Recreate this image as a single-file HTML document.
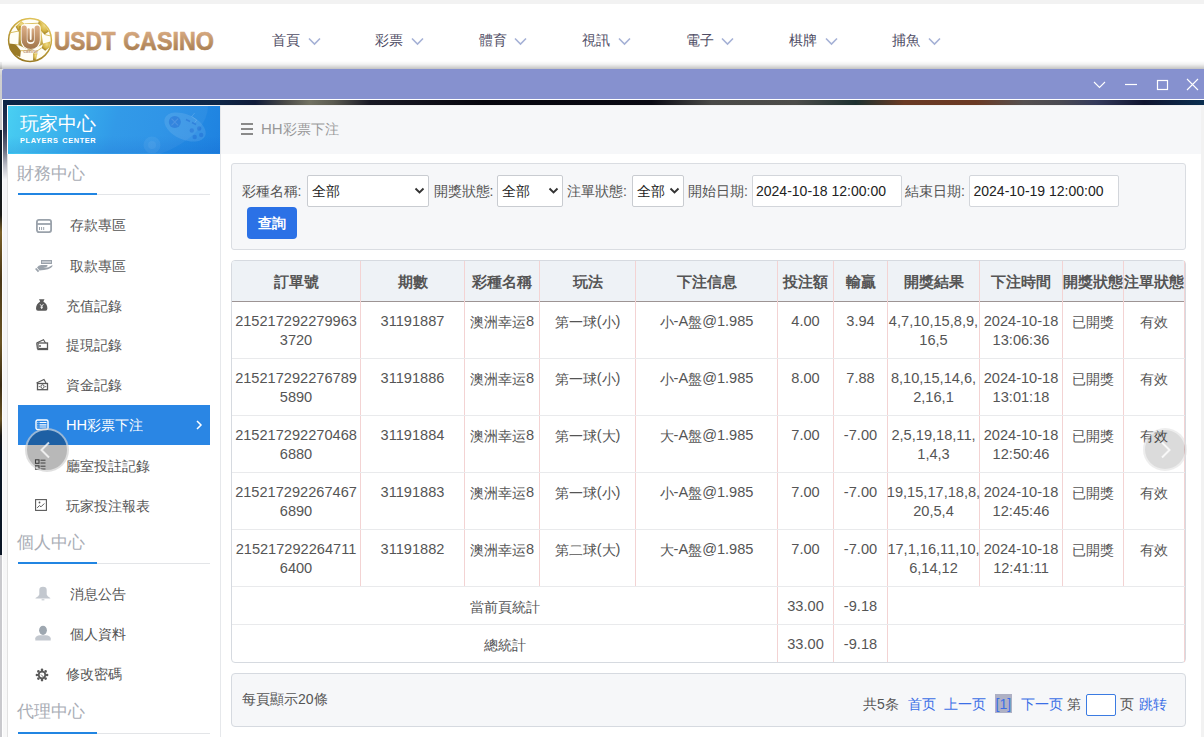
<!DOCTYPE html><html><head><meta charset="utf-8"><style>
*{margin:0;padding:0;box-sizing:border-box}
html,body{width:1204px;height:737px;overflow:hidden;background:#fff;font-family:"Liberation Sans",sans-serif;color:#333}
.a{position:absolute}
.nw{white-space:nowrap}
.n{font-size:14.6px}
.c{position:relative;top:1px}
</style></head><body><div class="a" style="left:0px;top:0px;width:1204px;height:4px;background:#f2f2f2"></div>
<svg class="a" style="left:0;top:0" width="230" height="68" viewBox="0 0 230 68">
<defs><radialGradient id="gd" cx="0.6" cy="0.3" r="0.8"><stop offset="0" stop-color="#f0dc8a"/><stop offset=".5" stop-color="#d8b848"/><stop offset="1" stop-color="#8a6a18"/></radialGradient>
<linearGradient id="ub" x1="0" y1="0" x2="0" y2="1"><stop offset="0" stop-color="#d8aa82"/><stop offset="1" stop-color="#a67a50"/></linearGradient>
<linearGradient id="tg" x1="0" y1="0" x2="0" y2="1"><stop offset="0.1" stop-color="#dcae86"/><stop offset="1" stop-color="#a07648"/></linearGradient></defs>
<circle cx="30" cy="40" r="21.4" fill="#fffef6" stroke="url(#gd)" stroke-width="1.5"/>
<g fill="url(#gd)">
<path d="M38.9 21.1 L44.5 24.6 L48.8 31.6 L44.5 34.5 L40.3 30.2 L38.2 23.2 Z"/>
<path d="M9.2 43.6 L15.6 44.3 L20.9 50.7 L20.2 57 L13.5 54.2 L9.9 49.3 Z" fill="#9a7a26"/>
<path d="M15.6 26.7 L21.2 21.1 L24.8 23.9 L22.6 30.2 L18.4 31.6 Z"/>
<path d="M43.1 43.6 L50.2 41.5 L49.5 47.2 L45.2 50.7 L41.7 47.9 Z"/>
<path d="M33.2 53.5 L37.5 53.2 L36 59.9 L33.2 60.6 Z"/>
<path d="M19.1 26 L40.3 24.6 L43.1 44.3 L30.4 50.7 L18.4 45 Z" opacity=".9"/>
</g>
<g stroke="#d6b850" stroke-width=".9" fill="none"><path d="M22.6 30.2 L9 33 M24.8 23.9 L38.2 23.2 M44.5 34.5 L50.8 36 M15.6 44.3 L18.4 45 M41.7 47.9 L33.2 53.5 M20.9 50.7 L30.4 50.7"/></g>
<path d="M20.8 28 Q20.8 24 25 24 H36.5 Q40.7 24 40.7 28 V40 Q40.7 49.6 30.7 49.6 Q20.8 49.6 20.8 40 Z" fill="#fffdf6"/>
<path d="M24.2 28 V40 A6.5 6.5 0 0 0 37.2 40 V28" fill="none" stroke="url(#ub)" stroke-width="5.2" stroke-linecap="round"/>
<path d="M28.6 29.5 V39 A2.1 2.1 0 0 0 32.8 39 V29.5" fill="none" stroke="url(#ub)" stroke-width="2.4" stroke-linecap="round"/>
<text x="30.5" y="53" font-size="4.6" text-anchor="middle" fill="#c09a80" font-family="Liberation Sans" font-weight="bold">casino</text>
<g font-family="Liberation Sans" font-weight="bold" font-size="25" fill="url(#tg)" stroke="url(#tg)" stroke-width="0.7">
<text x="54" y="49.5" textLength="61.5" lengthAdjust="spacingAndGlyphs">USDT</text>
<text x="123.3" y="49.5" textLength="90.5" lengthAdjust="spacingAndGlyphs">CASINO</text>
</g>
</svg>
<div class="a nw" style="left:272.0px;top:31px;font-size:14px;line-height:18px;color:#4f4d65">首頁</div>
<svg class="a" style="left:307.5px;top:36.5px" width="13" height="9" viewBox="0 0 13 9"><path d="M1 1.5 L6.5 7 L12 1.5" fill="none" stroke="#a5b1d6" stroke-width="1.6"/></svg>
<div class="a nw" style="left:375.4px;top:31px;font-size:14px;line-height:18px;color:#4f4d65">彩票</div>
<svg class="a" style="left:410.9px;top:36.5px" width="13" height="9" viewBox="0 0 13 9"><path d="M1 1.5 L6.5 7 L12 1.5" fill="none" stroke="#a5b1d6" stroke-width="1.6"/></svg>
<div class="a nw" style="left:478.8px;top:31px;font-size:14px;line-height:18px;color:#4f4d65">體育</div>
<svg class="a" style="left:514.3px;top:36.5px" width="13" height="9" viewBox="0 0 13 9"><path d="M1 1.5 L6.5 7 L12 1.5" fill="none" stroke="#a5b1d6" stroke-width="1.6"/></svg>
<div class="a nw" style="left:582.2px;top:31px;font-size:14px;line-height:18px;color:#4f4d65">視訊</div>
<svg class="a" style="left:617.7px;top:36.5px" width="13" height="9" viewBox="0 0 13 9"><path d="M1 1.5 L6.5 7 L12 1.5" fill="none" stroke="#a5b1d6" stroke-width="1.6"/></svg>
<div class="a nw" style="left:685.6px;top:31px;font-size:14px;line-height:18px;color:#4f4d65">電子</div>
<svg class="a" style="left:721.1px;top:36.5px" width="13" height="9" viewBox="0 0 13 9"><path d="M1 1.5 L6.5 7 L12 1.5" fill="none" stroke="#a5b1d6" stroke-width="1.6"/></svg>
<div class="a nw" style="left:789.0px;top:31px;font-size:14px;line-height:18px;color:#4f4d65">棋牌</div>
<svg class="a" style="left:824.5px;top:36.5px" width="13" height="9" viewBox="0 0 13 9"><path d="M1 1.5 L6.5 7 L12 1.5" fill="none" stroke="#a5b1d6" stroke-width="1.6"/></svg>
<div class="a nw" style="left:892.4px;top:31px;font-size:14px;line-height:18px;color:#4f4d65">捕魚</div>
<svg class="a" style="left:927.9px;top:36.5px" width="13" height="9" viewBox="0 0 13 9"><path d="M1 1.5 L6.5 7 L12 1.5" fill="none" stroke="#a5b1d6" stroke-width="1.6"/></svg>
<div class="a" style="left:0px;top:62px;width:2px;height:68px;background:linear-gradient(#f4f4f4,#d0d0d0 20%,#c8c8c8)"></div>
<div class="a" style="left:0px;top:130px;width:2px;height:425px;background:linear-gradient(#0b1a2a,#1a1a18 20%,#7a6028 24%,#4a3818 35%,#6a5424 50%,#3a2c14 60%,#6a5424 68%,#1a1a1a 72%,#0a1626 76%,#0a1626)"></div>
<div class="a" style="left:0px;top:555px;width:2px;height:182px;background:#c9c9cd"></div>
<div class="a" style="left:0px;top:61px;width:1204px;height:8px;background:linear-gradient(rgba(0,0,0,0),rgba(0,0,0,0.05) 40%,rgba(0,0,0,0.24))"></div>
<div class="a" style="left:2px;top:69px;width:1202px;height:30px;background:#8691cf;border-top-left-radius:2px"></div>
<svg class="a" style="left:1090px;top:76px" width="114" height="18" viewBox="0 0 114 18">
<path d="M4 6 L9.5 11.5 L15 6" fill="none" stroke="#fff" stroke-width="1.1"/>
<path d="M35 8.5 H47" stroke="#fff" stroke-width="1.2"/>
<rect x="67.5" y="4.5" width="10" height="9" fill="none" stroke="#fff" stroke-width="1.2"/>
<path d="M97 3 L108 14 M108 3 L97 14" stroke="#fff" stroke-width="1.1"/>
</svg>
<div class="a" style="left:2px;top:99px;width:1202px;height:1px;background:#fff"></div>
<div class="a" style="left:2px;top:99px;width:1px;height:638px;background:#fff"></div>
<div class="a" style="left:3px;top:100px;width:1201px;height:5px;background:linear-gradient(90deg,#0c2444 0%,#0f2748 18%,#101c3a 21%,#4a4a48 23.5%,#727262 25.5%,#5a5a50 27.5%,#1a1a26 30.5%,#07070f 40%,#0a0a14 54%,#4a4a48 59%,#4c4c4a 66%,#1d3030 71%,#6a3a24 75%,#6b3a25 81%,#555050 85%,#4a4a52 88%,#343a5c 91%,#101530 95%,#0a2e50 100%)"></div>
<div class="a" style="left:3px;top:100px;width:4px;height:637px;background:linear-gradient(#0c2444 0px,#2c3450 30px,#6a6e80 50px,#b8bac4 65px,#f4f4f6 80px,#f8f8f8 100%)"></div>
<div class="a" style="left:7px;top:105px;width:1197px;height:1px;background:#f0f0f0"></div>
<div class="a" style="left:7px;top:105px;width:1px;height:632px;background:linear-gradient(#fff 49px,#e2e2e2 49px)"></div>
<div class="a" style="left:8px;top:106px;width:212px;height:631px;background:#fff"></div>
<div class="a" style="left:220px;top:106px;width:1px;height:631px;background:#e6e8eb"></div>
<div class="a" style="left:221px;top:106px;width:980px;height:631px;background:#fff"></div>
<div class="a" style="left:221px;top:106px;width:980px;height:48px;background:#f6f7f9"></div>
<div class="a" style="left:1201px;top:106px;width:3px;height:631px;background:#f2f2f2"></div>
<div class="a" style="left:8px;top:106px;width:212px;height:48px;overflow:hidden;background:linear-gradient(105deg,#40cdf2 0%,#2eaaec 30%,#2795e7 50%,#2590e6 70%,#1f82e0 100%)">
<div class="a" style="left:-40px;top:-60px;width:240px;height:120px;border-radius:50%;background:rgba(255,255,255,0.05)"></div>
<div class="a" style="left:0;top:30px;width:212px;height:17px;background:linear-gradient(rgba(0,60,180,0),rgba(0,60,180,0.12))"></div>
<svg class="a" style="left:0;top:0" width="212" height="47" viewBox="0 0 212 47">
<g transform="rotate(24 177 21)"><ellipse cx="177" cy="21" rx="22" ry="12.5" fill="rgba(255,255,255,0.10)"/></g>
<circle cx="166.8" cy="16" r="6" fill="rgba(0,60,190,0.25)"/>
<path d="M163.5 12.7 L170.1 19.3 M170.1 12.7 L163.5 19.3" stroke="rgba(255,255,255,0.12)" stroke-width="1.2"/>
<g fill="rgba(0,60,190,0.22)"><circle cx="183.8" cy="24.5" r="2.2"/><circle cx="191.2" cy="22.5" r="2.2"/><circle cx="186.7" cy="31" r="2.2"/><circle cx="193.2" cy="29" r="2.2"/></g>
<path d="M178 13.5 l4 2 M184 16.5 l4 2" stroke="rgba(0,60,190,0.25)" stroke-width="1.5"/>
<path d="M186.7 7 l-3 3.5 l5 3.5 l-2 2.5" fill="none" stroke="rgba(255,255,255,0.14)" stroke-width="1"/>
<circle cx="144" cy="39" r="8.5" fill="rgba(255,255,255,0.06)"/>
<circle cx="144" cy="39" r="4" fill="rgba(255,255,255,0.05)"/>
</svg>
</div>
<div class="a nw" style="left:20px;top:113px;font-size:19px;line-height:22px;color:#fff">玩家中心</div>
<div class="a nw" style="left:20px;top:135.5px;font-size:7.4px;line-height:10px;color:#fff;font-weight:bold;letter-spacing:0.6px;word-spacing:1.2px">PLAYERS CENTER</div>
<div class="a nw" style="left:17px;top:162.5px;font-size:17px;line-height:22px;color:#a9adb5">財務中心</div>
<div class="a" style="left:18px;top:193px;width:79px;height:2px;background:#2185e2"></div>
<div class="a" style="left:97px;top:194px;width:113px;height:1px;background:#e3e5e8"></div>
<div class="a nw" style="left:17px;top:532px;font-size:17px;line-height:22px;color:#a9adb5">個人中心</div>
<div class="a" style="left:18px;top:562px;width:79px;height:2px;background:#2185e2"></div>
<div class="a" style="left:97px;top:563px;width:113px;height:1px;background:#e3e5e8"></div>
<div class="a nw" style="left:17px;top:701px;font-size:17px;line-height:22px;color:#a9adb5">代理中心</div>
<div class="a" style="left:18px;top:732px;width:79px;height:2px;background:#2185e2"></div>
<div class="a" style="left:97px;top:733px;width:113px;height:1px;background:#e3e5e8"></div>
<div class="a" style="left:35px;top:218px;line-height:0"><svg width="18" height="16" viewBox="0 0 18 16"><rect x="1.9" y="1.9" width="14.2" height="12.2" rx="2" fill="none" stroke="#9aa2ab" stroke-width="1.8"/><path d="M2 6 H16" stroke="#9aa2ab" stroke-width="1.8"/><path d="M4.5 9 v3 M6.6 9 v3 M8.7 9 v3" stroke="#9aa2ab" stroke-width="1"/></svg></div>
<div class="a nw" style="left:70px;top:216.3px;font-size:14px;line-height:19px;color:#555">存款專區</div>
<div class="a" style="left:35px;top:258px;line-height:0"><svg width="18" height="16" viewBox="0 0 18 16"><rect x="6.5" y="2.5" width="10" height="3" fill="#c4c9cf" stroke="#9aa2ab" stroke-width="1"/><path d="M2 9.5 Q3.5 7 6 7 H12.5 Q12.8 8.8 11 9 H8 Q11 9.8 13.5 9.2 L17.5 7 Q17.8 8.5 16 9.8 Q13.5 11.8 9 12 Q6 12 4.5 12.5 Z" fill="#9aa2ab"/><path d="M0.7 10.5 L3.6 13.6" stroke="#9aa2ab" stroke-width="1.8"/></svg></div>
<div class="a nw" style="left:70px;top:256.5px;font-size:14px;line-height:19px;color:#555">取款專區</div>
<div class="a" style="left:35px;top:297.5px;line-height:0"><svg width="14" height="14" viewBox="0 0 14 14"><path d="M4 1.2 H9.5 L8.3 3.5 Q12.5 6 12.4 10.5 Q12.4 12.7 10.5 12.7 H3 Q1 12.7 1 10.5 Q1 6 5.2 3.5 Z" fill="#595959"/><path d="M5 6.2 L6.7 8.2 L8.4 6.2 M6.7 8.2 V11 M5.4 9.2 H8" fill="none" stroke="#fff" stroke-width="0.9"/></svg></div>
<div class="a nw" style="left:66px;top:296.8px;font-size:14px;line-height:19px;color:#555">充值記錄</div>
<div class="a" style="left:35px;top:338px;line-height:0"><svg width="14" height="14" viewBox="0 0 14 14"><path d="M1.5 5 L8.5 1.8 L10.5 5" fill="none" stroke="#595959" stroke-width="1.1"/><rect x="3" y="5" width="9.5" height="6.5" fill="none" stroke="#595959" stroke-width="1.3"/><path d="M1.6 5.2 L2.4 11" stroke="#595959" stroke-width="1"/><rect x="4" y="7" width="2" height="2" fill="#595959" opacity=".7"/><path d="M3.5 10.5 H12" stroke="#595959" stroke-width="1.2"/></svg></div>
<div class="a nw" style="left:66px;top:335.8px;font-size:14px;line-height:19px;color:#555">提現記錄</div>
<div class="a" style="left:35px;top:378px;line-height:0"><svg width="14" height="14" viewBox="0 0 14 14"><path d="M1.5 5 L9 1.5 L11 5" fill="none" stroke="#595959" stroke-width="1.1"/><rect x="2.5" y="5.5" width="10" height="6.2" fill="none" stroke="#595959" stroke-width="1.3"/><ellipse cx="7.5" cy="8.6" rx="1.6" ry="1.9" fill="none" stroke="#595959" stroke-width="1"/><circle cx="4.3" cy="8.6" r=".6" fill="#595959"/><circle cx="10.7" cy="8.6" r=".6" fill="#595959"/></svg></div>
<div class="a nw" style="left:66px;top:375.6px;font-size:14px;line-height:19px;color:#555">資金記錄</div>
<div class="a" style="left:18px;top:405px;width:192px;height:40px;background:#2a86e4"></div>
<div class="a" style="left:34.5px;top:418.5px;line-height:0"><svg width="14" height="12" viewBox="0 0 14 12"><rect x="1" y="1" width="12" height="9.5" rx="1.5" fill="none" stroke="#fff" stroke-width="1.4"/><path d="M4.5 3.5 H11.5 M4.5 5.8 H11.5 M4.5 8 H11.5" stroke="#fff" stroke-width="1.2"/><path d="M2.5 3.5 h.8 M2.5 5.8 h.8 M2.5 8 h.8" stroke="#fff" stroke-width="1"/></svg></div>
<div class="a nw" style="left:66px;top:416.4px;font-size:14px;line-height:19px;color:#fff"><span class="n">HH</span>彩票下注</div>
<svg class="a" style="left:194px;top:419px" width="10" height="12" viewBox="0 0 10 12"><path d="M3 2 L7 6 L3 10" fill="none" stroke="#fff" stroke-width="1.5"/></svg>
<div class="a" style="left:34px;top:457.5px;line-height:0"><svg width="14" height="14" viewBox="0 0 14 14"><rect x="1.5" y="1.8" width="3.5" height="3.5" fill="none" stroke="#595959" stroke-width="1.1"/><rect x="1.5" y="7.8" width="3.5" height="3.5" fill="none" stroke="#595959" stroke-width="1.1"/><path d="M6.5 2.2 H11.5 M6.5 5 H11.5 M6.5 8.2 H11.5 M6.5 11 H11.5" stroke="#595959" stroke-width="1"/></svg></div>
<div class="a nw" style="left:66px;top:457.4px;font-size:14px;line-height:19px;color:#555">廳室投註記錄</div>
<div class="a" style="left:34px;top:497.5px;line-height:0"><svg width="14" height="14" viewBox="0 0 14 14"><rect x="1.6" y="1.6" width="10.8" height="10.8" fill="none" stroke="#595959" stroke-width="1.1"/><path d="M3.2 9.8 L5.5 7.6 L7 8.8 L10.3 5.5" fill="none" stroke="#595959" stroke-width="1"/><circle cx="5.5" cy="4.5" r=".9" fill="#595959"/></svg></div>
<div class="a nw" style="left:66px;top:496.7px;font-size:14px;line-height:19px;color:#555">玩家投注報表</div>
<div class="a" style="left:35px;top:585px;line-height:0"><svg width="16" height="17" viewBox="0 0 16 17"><path d="M4.3 5 Q4.3 1.8 8 1.8 Q11.7 1.8 11.7 5 V9.5 Q12 11.3 15.3 12.9 V13.4 H0.5 V12.9 Q4 11.3 4.3 9.5 Z" fill="#c3c8cf"/><path d="M6.6 14.8 H9.4" stroke="#c3c8cf" stroke-width="1.1"/></svg></div>
<div class="a nw" style="left:70px;top:584.7px;font-size:14px;line-height:19px;color:#555">消息公告</div>
<div class="a" style="left:35px;top:625px;line-height:0"><svg width="16" height="16" viewBox="0 0 16 16"><ellipse cx="8" cy="5.3" rx="3.9" ry="4.6" fill="#9ea7b0"/><path d="M0.3 15.6 V13.2 Q0.8 10.8 5 10.3 H11 Q15.2 10.8 15.7 13.2 V15.6 Z" fill="#c3c8cf"/></svg></div>
<div class="a nw" style="left:70px;top:624.5px;font-size:14px;line-height:19px;color:#555">個人資料</div>
<div class="a" style="left:34.5px;top:667.5px;line-height:0"><svg width="14" height="14" viewBox="0 0 14 14"><g fill="#595959"><circle cx="7" cy="7" r="4.2"/><circle cx="7" cy="1.9" r="1.3"/><circle cx="7" cy="12.1" r="1.3"/><circle cx="1.9" cy="7" r="1.3"/><circle cx="12.1" cy="7" r="1.3"/><circle cx="3.4" cy="3.4" r="1.3"/><circle cx="10.6" cy="3.4" r="1.3"/><circle cx="3.4" cy="10.6" r="1.3"/><circle cx="10.6" cy="10.6" r="1.3"/></g><circle cx="7" cy="7" r="2.4" fill="#fff"/><path d="M6 6.5 L8.5 9" stroke="#595959" stroke-width=".9"/></svg></div>
<div class="a nw" style="left:66px;top:664.5px;font-size:14px;line-height:19px;color:#555">修改密碼</div>
<svg class="a" style="left:240px;top:122px" width="14" height="14" viewBox="0 0 14 14"><path d="M1 2 H13 M1 7 H13 M1 12 H13" stroke="#8a8a8a" stroke-width="1.8"/></svg>
<div class="a nw" style="left:261px;top:119px;font-size:14px;line-height:19px;color:#999"><span style="font-size:15px">HH</span>彩票下注</div>
<div class="a" style="left:231px;top:163px;width:955px;height:87px;background:#f6f7f9;border:1px solid #dadde2;border-radius:3px"></div>
<div class="a nw" style="left:241.5px;top:182px;font-size:14px;line-height:19px;color:#555">彩種名稱:</div>
<div class="a" style="left:307px;top:175px;width:122px;height:32px;background:#fff;border:1px solid #c9ccd1;border-radius:2px"></div>
<div class="a nw" style="left:311.5px;top:182px;font-size:14px;line-height:19px;color:#222">全部</div>
<svg class="a" style="left:414px;top:186px" width="11" height="9" viewBox="0 0 11 9"><path d="M1.5 2.5 L5.5 6.5 L9.5 2.5" fill="none" stroke="#333" stroke-width="1.9"/></svg>
<div class="a nw" style="left:433.5px;top:182px;font-size:14px;line-height:19px;color:#555">開獎狀態:</div>
<div class="a" style="left:497px;top:175px;width:66px;height:32px;background:#fff;border:1px solid #c9ccd1;border-radius:2px"></div>
<div class="a nw" style="left:501.5px;top:182px;font-size:14px;line-height:19px;color:#222">全部</div>
<svg class="a" style="left:548px;top:186px" width="11" height="9" viewBox="0 0 11 9"><path d="M1.5 2.5 L5.5 6.5 L9.5 2.5" fill="none" stroke="#333" stroke-width="1.9"/></svg>
<div class="a nw" style="left:567px;top:182px;font-size:14px;line-height:19px;color:#555">注單狀態:</div>
<div class="a" style="left:632px;top:175px;width:52px;height:32px;background:#fff;border:1px solid #c9ccd1;border-radius:2px"></div>
<div class="a nw" style="left:636.5px;top:182px;font-size:14px;line-height:19px;color:#222">全部</div>
<svg class="a" style="left:669px;top:186px" width="11" height="9" viewBox="0 0 11 9"><path d="M1.5 2.5 L5.5 6.5 L9.5 2.5" fill="none" stroke="#333" stroke-width="1.9"/></svg>
<div class="a nw" style="left:688px;top:182px;font-size:14px;line-height:19px;color:#555">開始日期:</div>
<div class="a" style="left:752px;top:175px;width:150px;height:32px;background:#fff;border:1px solid #d3d6db;border-radius:2px"></div>
<div class="a nw" style="left:756px;top:182px;font-size:14px;line-height:19px;color:#222">2024-10-18 12:00:00</div>
<div class="a nw" style="left:905px;top:182px;font-size:14px;line-height:19px;color:#555">結束日期:</div>
<div class="a" style="left:969px;top:175px;width:150px;height:32px;background:#fff;border:1px solid #d3d6db;border-radius:2px"></div>
<div class="a nw" style="left:973.5px;top:182px;font-size:14px;line-height:19px;color:#222">2024-10-19 12:00:00</div>
<div class="a" style="left:247px;top:207px;width:50px;height:32px;background:#2b71e6;border-radius:4px"></div>
<div class="a nw" style="left:247px;top:214px;width:50px;text-align:center;font-size:14px;line-height:19px;color:#fff;font-weight:bold">查詢</div>
<div class="a" style="left:231px;top:260px;width:955px;height:403px;background:#fff;border:1px solid #d6dae0;border-radius:4px;overflow:hidden"></div>
<div class="a" style="left:232px;top:261px;width:953px;height:40px;background:#eef2f6;border-top-left-radius:3px;border-top-right-radius:3px"></div>
<div class="a" style="left:232px;top:301px;width:953px;height:1px;background:#9d9494"></div>
<div class="a" style="left:360px;top:261px;width:1px;height:326px;background:#f3d3d3"></div>
<div class="a" style="left:464px;top:261px;width:1px;height:326px;background:#f3d3d3"></div>
<div class="a" style="left:539px;top:261px;width:1px;height:326px;background:#f3d3d3"></div>
<div class="a" style="left:635px;top:261px;width:1px;height:326px;background:#f3d3d3"></div>
<div class="a" style="left:777px;top:261px;width:1px;height:326px;background:#f3d3d3"></div>
<div class="a" style="left:833px;top:261px;width:1px;height:326px;background:#f3d3d3"></div>
<div class="a" style="left:887px;top:261px;width:1px;height:326px;background:#f3d3d3"></div>
<div class="a" style="left:979px;top:261px;width:1px;height:326px;background:#f3d3d3"></div>
<div class="a" style="left:1062px;top:261px;width:1px;height:326px;background:#f3d3d3"></div>
<div class="a" style="left:1123px;top:261px;width:1px;height:326px;background:#f3d3d3"></div>
<div class="a" style="left:1184px;top:261px;width:1px;height:326px;background:#f3d3d3"></div>
<div class="a" style="left:777px;top:587px;width:1px;height:75px;background:#f3d3d3"></div>
<div class="a" style="left:833px;top:587px;width:1px;height:75px;background:#f3d3d3"></div>
<div class="a" style="left:887px;top:587px;width:1px;height:75px;background:#f3d3d3"></div>
<div class="a" style="left:1184px;top:587px;width:1px;height:75px;background:#f3d3d3"></div>
<div class="a" style="left:232px;top:358px;width:953px;height:1px;background:#e9eaec"></div>
<div class="a" style="left:232px;top:415px;width:953px;height:1px;background:#e9eaec"></div>
<div class="a" style="left:232px;top:472px;width:953px;height:1px;background:#e9eaec"></div>
<div class="a" style="left:232px;top:529px;width:953px;height:1px;background:#e9eaec"></div>
<div class="a" style="left:232px;top:586px;width:953px;height:1px;background:#e9eaec"></div>
<div class="a" style="left:232px;top:624px;width:953px;height:1px;background:#e9eaec"></div>
<div class="a nw" style="left:222px;top:272px;width:148px;text-align:center;font-size:14px;line-height:19px;color:#555;font-weight:bold;font-size:15px">訂單號</div>
<div class="a nw" style="left:351px;top:272px;width:123px;text-align:center;font-size:14px;line-height:19px;color:#555;font-weight:bold;font-size:15px">期數</div>
<div class="a nw" style="left:455px;top:272px;width:94px;text-align:center;font-size:14px;line-height:19px;color:#555;font-weight:bold;font-size:15px">彩種名稱</div>
<div class="a nw" style="left:530px;top:272px;width:115px;text-align:center;font-size:14px;line-height:19px;color:#555;font-weight:bold;font-size:15px">玩法</div>
<div class="a nw" style="left:626px;top:272px;width:161px;text-align:center;font-size:14px;line-height:19px;color:#555;font-weight:bold;font-size:15px">下注信息</div>
<div class="a nw" style="left:768px;top:272px;width:75px;text-align:center;font-size:14px;line-height:19px;color:#555;font-weight:bold;font-size:15px">投注額</div>
<div class="a nw" style="left:824px;top:272px;width:73px;text-align:center;font-size:14px;line-height:19px;color:#555;font-weight:bold;font-size:15px">輸贏</div>
<div class="a nw" style="left:878px;top:272px;width:111px;text-align:center;font-size:14px;line-height:19px;color:#555;font-weight:bold;font-size:15px">開獎結果</div>
<div class="a nw" style="left:970px;top:272px;width:102px;text-align:center;font-size:14px;line-height:19px;color:#555;font-weight:bold;font-size:15px">下注時間</div>
<div class="a nw" style="left:1053px;top:272px;width:80px;text-align:center;font-size:14px;line-height:19px;color:#555;font-weight:bold;font-size:15px">開獎狀態</div>
<div class="a nw" style="left:1114px;top:272px;width:80px;text-align:center;font-size:14px;line-height:19px;color:#555;font-weight:bold;font-size:15px">注單狀態</div>
<div class="a nw" style="left:222px;top:311.75px;width:148px;text-align:center;font-size:14px;line-height:19.5px;color:#555;"><span class="n">215217292279963</span><br><span class="n">3720</span></div>
<div class="a nw" style="left:351px;top:311.75px;width:123px;text-align:center;font-size:14px;line-height:19.5px;color:#555;"><span class="n">31191887</span></div>
<div class="a nw" style="left:455px;top:311.75px;width:94px;text-align:center;font-size:14px;line-height:19.5px;color:#555;"><span class="c">澳洲幸运</span><span class="n">8</span></div>
<div class="a nw" style="left:530px;top:311.75px;width:115px;text-align:center;font-size:14px;line-height:19.5px;color:#555;"><span class="c">第一球</span><span class="n">(</span><span class="c">小</span><span class="n">)</span></div>
<div class="a nw" style="left:626px;top:311.75px;width:161px;text-align:center;font-size:14px;line-height:19.5px;color:#555;"><span class="c">小</span><span class="n">-A</span><span class="c">盤</span><span class="n">@1.985</span></div>
<div class="a nw" style="left:768px;top:311.75px;width:75px;text-align:center;font-size:14px;line-height:19.5px;color:#555;"><span class="n">4.00</span></div>
<div class="a nw" style="left:824px;top:311.75px;width:73px;text-align:center;font-size:14px;line-height:19.5px;color:#555;"><span class="n">3.94</span></div>
<div class="a nw" style="left:878px;top:311.75px;width:111px;text-align:center;font-size:14px;line-height:19.5px;color:#555;"><span class="n">4,7,10,15,8,9,</span><br><span class="n">16,5</span></div>
<div class="a nw" style="left:970px;top:311.75px;width:102px;text-align:center;font-size:14px;line-height:19.5px;color:#555;"><span class="n">2024-10-18</span><br><span class="n">13:06:36</span></div>
<div class="a nw" style="left:1053px;top:312px;width:80px;text-align:center;font-size:14px;line-height:19px;color:#555;"><span class="c">已開獎</span></div>
<div class="a nw" style="left:1114px;top:312px;width:80px;text-align:center;font-size:14px;line-height:19px;color:#555;"><span class="c">有效</span></div>
<div class="a nw" style="left:222px;top:368.75px;width:148px;text-align:center;font-size:14px;line-height:19.5px;color:#555;"><span class="n">215217292276789</span><br><span class="n">5890</span></div>
<div class="a nw" style="left:351px;top:368.75px;width:123px;text-align:center;font-size:14px;line-height:19.5px;color:#555;"><span class="n">31191886</span></div>
<div class="a nw" style="left:455px;top:368.75px;width:94px;text-align:center;font-size:14px;line-height:19.5px;color:#555;"><span class="c">澳洲幸运</span><span class="n">8</span></div>
<div class="a nw" style="left:530px;top:368.75px;width:115px;text-align:center;font-size:14px;line-height:19.5px;color:#555;"><span class="c">第一球</span><span class="n">(</span><span class="c">小</span><span class="n">)</span></div>
<div class="a nw" style="left:626px;top:368.75px;width:161px;text-align:center;font-size:14px;line-height:19.5px;color:#555;"><span class="c">小</span><span class="n">-A</span><span class="c">盤</span><span class="n">@1.985</span></div>
<div class="a nw" style="left:768px;top:368.75px;width:75px;text-align:center;font-size:14px;line-height:19.5px;color:#555;"><span class="n">8.00</span></div>
<div class="a nw" style="left:824px;top:368.75px;width:73px;text-align:center;font-size:14px;line-height:19.5px;color:#555;"><span class="n">7.88</span></div>
<div class="a nw" style="left:878px;top:368.75px;width:111px;text-align:center;font-size:14px;line-height:19.5px;color:#555;"><span class="n">8,10,15,14,6,</span><br><span class="n">2,16,1</span></div>
<div class="a nw" style="left:970px;top:368.75px;width:102px;text-align:center;font-size:14px;line-height:19.5px;color:#555;"><span class="n">2024-10-18</span><br><span class="n">13:01:18</span></div>
<div class="a nw" style="left:1053px;top:369px;width:80px;text-align:center;font-size:14px;line-height:19px;color:#555;"><span class="c">已開獎</span></div>
<div class="a nw" style="left:1114px;top:369px;width:80px;text-align:center;font-size:14px;line-height:19px;color:#555;"><span class="c">有效</span></div>
<div class="a nw" style="left:222px;top:425.75px;width:148px;text-align:center;font-size:14px;line-height:19.5px;color:#555;"><span class="n">215217292270468</span><br><span class="n">6880</span></div>
<div class="a nw" style="left:351px;top:425.75px;width:123px;text-align:center;font-size:14px;line-height:19.5px;color:#555;"><span class="n">31191884</span></div>
<div class="a nw" style="left:455px;top:425.75px;width:94px;text-align:center;font-size:14px;line-height:19.5px;color:#555;"><span class="c">澳洲幸运</span><span class="n">8</span></div>
<div class="a nw" style="left:530px;top:425.75px;width:115px;text-align:center;font-size:14px;line-height:19.5px;color:#555;"><span class="c">第一球</span><span class="n">(</span><span class="c">大</span><span class="n">)</span></div>
<div class="a nw" style="left:626px;top:425.75px;width:161px;text-align:center;font-size:14px;line-height:19.5px;color:#555;"><span class="c">大</span><span class="n">-A</span><span class="c">盤</span><span class="n">@1.985</span></div>
<div class="a nw" style="left:768px;top:425.75px;width:75px;text-align:center;font-size:14px;line-height:19.5px;color:#555;"><span class="n">7.00</span></div>
<div class="a nw" style="left:824px;top:425.75px;width:73px;text-align:center;font-size:14px;line-height:19.5px;color:#555;"><span class="n">-7.00</span></div>
<div class="a nw" style="left:878px;top:425.75px;width:111px;text-align:center;font-size:14px;line-height:19.5px;color:#555;"><span class="n">2,5,19,18,11,</span><br><span class="n">1,4,3</span></div>
<div class="a nw" style="left:970px;top:425.75px;width:102px;text-align:center;font-size:14px;line-height:19.5px;color:#555;"><span class="n">2024-10-18</span><br><span class="n">12:50:46</span></div>
<div class="a nw" style="left:1053px;top:426px;width:80px;text-align:center;font-size:14px;line-height:19px;color:#555;"><span class="c">已開獎</span></div>
<div class="a nw" style="left:1114px;top:426px;width:80px;text-align:center;font-size:14px;line-height:19px;color:#555;"><span class="c">有效</span></div>
<div class="a nw" style="left:222px;top:482.75px;width:148px;text-align:center;font-size:14px;line-height:19.5px;color:#555;"><span class="n">215217292267467</span><br><span class="n">6890</span></div>
<div class="a nw" style="left:351px;top:482.75px;width:123px;text-align:center;font-size:14px;line-height:19.5px;color:#555;"><span class="n">31191883</span></div>
<div class="a nw" style="left:455px;top:482.75px;width:94px;text-align:center;font-size:14px;line-height:19.5px;color:#555;"><span class="c">澳洲幸运</span><span class="n">8</span></div>
<div class="a nw" style="left:530px;top:482.75px;width:115px;text-align:center;font-size:14px;line-height:19.5px;color:#555;"><span class="c">第一球</span><span class="n">(</span><span class="c">小</span><span class="n">)</span></div>
<div class="a nw" style="left:626px;top:482.75px;width:161px;text-align:center;font-size:14px;line-height:19.5px;color:#555;"><span class="c">小</span><span class="n">-A</span><span class="c">盤</span><span class="n">@1.985</span></div>
<div class="a nw" style="left:768px;top:482.75px;width:75px;text-align:center;font-size:14px;line-height:19.5px;color:#555;"><span class="n">7.00</span></div>
<div class="a nw" style="left:824px;top:482.75px;width:73px;text-align:center;font-size:14px;line-height:19.5px;color:#555;"><span class="n">-7.00</span></div>
<div class="a nw" style="left:878px;top:482.75px;width:111px;text-align:center;font-size:14px;line-height:19.5px;color:#555;"><span class="n">19,15,17,18,8,</span><br><span class="n">20,5,4</span></div>
<div class="a nw" style="left:970px;top:482.75px;width:102px;text-align:center;font-size:14px;line-height:19.5px;color:#555;"><span class="n">2024-10-18</span><br><span class="n">12:45:46</span></div>
<div class="a nw" style="left:1053px;top:483px;width:80px;text-align:center;font-size:14px;line-height:19px;color:#555;"><span class="c">已開獎</span></div>
<div class="a nw" style="left:1114px;top:483px;width:80px;text-align:center;font-size:14px;line-height:19px;color:#555;"><span class="c">有效</span></div>
<div class="a nw" style="left:222px;top:539.75px;width:148px;text-align:center;font-size:14px;line-height:19.5px;color:#555;"><span class="n">215217292264711</span><br><span class="n">6400</span></div>
<div class="a nw" style="left:351px;top:539.75px;width:123px;text-align:center;font-size:14px;line-height:19.5px;color:#555;"><span class="n">31191882</span></div>
<div class="a nw" style="left:455px;top:539.75px;width:94px;text-align:center;font-size:14px;line-height:19.5px;color:#555;"><span class="c">澳洲幸运</span><span class="n">8</span></div>
<div class="a nw" style="left:530px;top:539.75px;width:115px;text-align:center;font-size:14px;line-height:19.5px;color:#555;"><span class="c">第二球</span><span class="n">(</span><span class="c">大</span><span class="n">)</span></div>
<div class="a nw" style="left:626px;top:539.75px;width:161px;text-align:center;font-size:14px;line-height:19.5px;color:#555;"><span class="c">大</span><span class="n">-A</span><span class="c">盤</span><span class="n">@1.985</span></div>
<div class="a nw" style="left:768px;top:539.75px;width:75px;text-align:center;font-size:14px;line-height:19.5px;color:#555;"><span class="n">7.00</span></div>
<div class="a nw" style="left:824px;top:539.75px;width:73px;text-align:center;font-size:14px;line-height:19.5px;color:#555;"><span class="n">-7.00</span></div>
<div class="a nw" style="left:878px;top:539.75px;width:111px;text-align:center;font-size:14px;line-height:19.5px;color:#555;"><span class="n">17,1,16,11,10,</span><br><span class="n">6,14,12</span></div>
<div class="a nw" style="left:970px;top:539.75px;width:102px;text-align:center;font-size:14px;line-height:19.5px;color:#555;"><span class="n">2024-10-18</span><br><span class="n">12:41:11</span></div>
<div class="a nw" style="left:1053px;top:540px;width:80px;text-align:center;font-size:14px;line-height:19px;color:#555;"><span class="c">已開獎</span></div>
<div class="a nw" style="left:1114px;top:540px;width:80px;text-align:center;font-size:14px;line-height:19px;color:#555;"><span class="c">有效</span></div>
<div class="a nw" style="left:232px;top:597px;width:545px;text-align:center;font-size:14px;line-height:19px;color:#555"><span class="c">當前頁統計</span></div>
<div class="a nw" style="left:232px;top:635px;width:545px;text-align:center;font-size:14px;line-height:19px;color:#555"><span class="c">總統計</span></div>
<div class="a nw" style="left:768px;top:597px;width:75px;text-align:center;font-size:14px;line-height:19px;color:#555;"><span class="n">33.00</span></div>
<div class="a nw" style="left:824px;top:597px;width:73px;text-align:center;font-size:14px;line-height:19px;color:#555;"><span class="n">-9.18</span></div>
<div class="a nw" style="left:768px;top:635px;width:75px;text-align:center;font-size:14px;line-height:19px;color:#555;"><span class="n">33.00</span></div>
<div class="a nw" style="left:824px;top:635px;width:73px;text-align:center;font-size:14px;line-height:19px;color:#555;"><span class="n">-9.18</span></div>
<div class="a" style="left:25px;top:428px;width:44px;height:44px;border-radius:50%;background:rgba(0,0,0,0.28);border:2px solid rgba(255,255,255,0.55)"></div>
<svg class="a" style="left:36px;top:439px" width="22" height="22" viewBox="0 0 22 22"><path d="M13 3.5 L5.5 11 L13 18.5" fill="none" stroke="rgba(255,255,255,0.75)" stroke-width="2"/></svg>
<div class="a" style="left:1143px;top:428px;width:44px;height:43px;border-radius:50%;background:rgba(0,0,0,0.14);border:2px solid rgba(255,255,255,0.5)"></div>
<svg class="a" style="left:1154px;top:439px" width="22" height="22" viewBox="0 0 22 22"><path d="M8 3.5 L15.5 11 L8 18.5" fill="none" stroke="rgba(255,255,255,0.8)" stroke-width="2"/></svg>
<div class="a" style="left:231px;top:673px;width:955px;height:54px;background:#f6f7f9;border:1px solid #d6dae0;border-radius:4px"></div>
<div class="a nw" style="left:242px;top:690px;font-size:14px;line-height:19px;color:#555">每頁顯示20條</div>
<div class="a nw" style="left:863px;top:695px;font-size:14px;line-height:19px;color:#555">共5条</div>
<div class="a nw" style="left:908px;top:695px;font-size:14px;line-height:19px;color:#3b6fe6">首页</div>
<div class="a nw" style="left:944px;top:695px;font-size:14px;line-height:19px;color:#3b6fe6">上一页</div>
<div class="a" style="left:995px;top:694px;width:17px;height:19px;background:#aeb0c4"></div>
<div class="a nw" style="left:995.5px;top:695px;font-size:14px;line-height:19px;color:#3b6fe6">[1]</div>
<div class="a nw" style="left:1021px;top:695px;font-size:14px;line-height:19px;color:#3b6fe6">下一页</div>
<div class="a nw" style="left:1066.5px;top:695px;font-size:14px;line-height:19px;color:#555">第</div>
<div class="a" style="left:1086px;top:694px;width:30px;height:22px;background:#fff;border:1px solid #3b7be2;border-radius:2px"></div>
<div class="a nw" style="left:1120px;top:695px;font-size:14px;line-height:19px;color:#555">页</div>
<div class="a nw" style="left:1138.5px;top:695px;font-size:14px;line-height:19px;color:#3b6fe6">跳转</div></body></html>
